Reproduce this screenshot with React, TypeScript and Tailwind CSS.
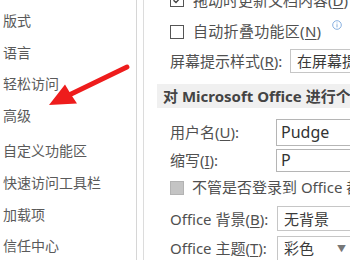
import React from "react";

const font = { fontFamily: "'Noto Sans', 'Noto Sans CJK SC', sans-serif" };

function U({ c }: { c: string }) {
  return <span className="underline underline-offset-2">{c}</span>;
}

function Info() {
  return (
    <svg width="10" height="10" viewBox="0 0 10 10" className="shrink-0">
      <circle cx="5" cy="5" r="4.3" fill="none" stroke="#7aa7dc" strokeWidth="0.9" />
      <rect x="4.55" y="4.2" width="0.9" height="3.2" fill="#7aa7dc" />
      <rect x="4.55" y="2.5" width="0.9" height="0.9" fill="#7aa7dc" />
    </svg>
  );
}

function Box({ checked, disabled }: { checked?: boolean; disabled?: boolean }) {
  return (
    <div
      className={
        "w-[14px] h-[14px] shrink-0 border flex items-center justify-center " +
        (disabled ? "bg-[#c4c4c4] border-[#b3b3b3]" : "bg-white border-[#555555]")
      }
    >
      {checked && (
        <svg width="10" height="10" viewBox="0 0 10 10">
          <path d="M1.5 5.2 L4 7.6 L8.6 2.4" fill="none" stroke="#444" strokeWidth="1.4" />
        </svg>
      )}
    </div>
  );
}

export default function App() {
  const side = ["版式", "语言", "轻松访问", "高级"];
  return (
    <div className="relative w-[350px] h-[260px] overflow-hidden bg-white flex" style={font}>
      {/* sidebar */}
      <div className="w-[137px] shrink-0 border-r border-[#d6d6d6] flex flex-col text-[14px] text-[#5a5a5a]">
        <div className="pt-[5px]">
          {side.map((s) => (
            <div key={s} className="h-[31.5px] flex items-center pl-[3px]">
              {s}
            </div>
          ))}
        </div>
        <div className="h-[2px] bg-[#e3e3e3] mr-[2px]" />
        <div className="mt-[4px]">
          {["自定义功能区", "快速访问工具栏"].map((s) => (
            <div key={s} className="h-[31.5px] flex items-center pl-[3px]">
              {s}
            </div>
          ))}
        </div>
        <div className="h-[2px] bg-[#e3e3e3] mr-[2px]" />
        <div className="mt-[1px]">
          {["加载项", "信任中心"].map((s) => (
            <div key={s} className="h-[31px] flex items-center pl-[3px]">
              {s}
            </div>
          ))}
        </div>
      </div>

      {/* main panel */}
      <div className="ml-[6px] flex-1 border-l border-[#dcdcdc] flex flex-col text-[15px] text-[#505050] whitespace-nowrap min-w-0">
        <div className="mt-[-15px] h-[30px] flex items-center pl-[26px] gap-[9px]">
          <Box checked />
          <span className="shrink-0">拖动时更新文档内容(<U c="D" />)</span>
          <span className="ml-[2px] -mt-[10px]"><Info /></span>
        </div>
        <div className="h-[34px] flex items-center pl-[26px] gap-[9px]">
          <Box />
          <span className="shrink-0 tracking-[0.3px]">自动折叠功能区(<U c="N" />)</span>
          <span className="ml-[2px] -mt-[14px]"><Info /></span>
        </div>
        <div className="h-[26px] flex items-center pl-[26px]">
          <span className="w-[120px] shrink-0">屏幕提示样式(<U c="R" />):</span>
          <div className="h-[24px] flex-1 min-w-0 overflow-hidden border border-r-0 border-[#c6c6c6] flex items-center pl-[6px] text-[#3a3a3a]">
            在屏幕提示中显示功能说明
          </div>
        </div>
        <div className="mt-[10px] ml-[13px] h-[24px] bg-[#f0f0f0] flex items-center pl-[6px] font-bold text-[#444] overflow-hidden">
          对 Microsoft Office 进行个性化设置
        </div>
        <div className="mt-[11px] h-[27px] flex items-center pl-[26px]">
          <span className="w-[106px] shrink-0">用户名(<U c="U" />):</span>
          <div className="h-full flex-1 min-w-0 border border-r-0 border-[#b5b5b5] flex items-center pl-[4px] text-[16px] text-[#333]">
            Pudge
          </div>
        </div>
        <div className="mt-[3px] h-[23px] flex items-center pl-[26px]">
          <span className="w-[106px] shrink-0">缩写(<U c="I" />):</span>
          <div className="h-full flex-1 min-w-0 border border-r-0 border-[#b5b5b5] flex items-center pl-[4px] text-[16px] text-[#333]">
            P
          </div>
        </div>
        <div className="mt-[4px] h-[24px] flex items-center pl-[26px] gap-[8px]">
          <Box disabled />
          <span className="shrink-0">不管是否登录到 Office 都始终使用这些值</span>
        </div>
        <div className="mt-[7px] h-[25px] flex items-center pl-[26px]">
          <span className="w-[107px] shrink-0">Office 背景(<U c="B" />):</span>
          <div className="h-full flex-1 min-w-0 border border-r-0 border-[#c6c6c6] flex items-center pl-[6px] text-[#3a3a3a]">
            无背景
          </div>
        </div>
        <div className="mt-[5px] h-[24px] flex items-center pl-[26px]">
          <span className="w-[107px] shrink-0">Office 主题(<U c="T" />):</span>
          <div className="h-full flex-1 min-w-0 border border-r-0 border-b-0 border-[#c6c6c6] flex items-center pl-[6px] text-[#3a3a3a]">
            <span className="w-[53px] shrink-0">彩色</span>
            <span className="text-[9px] text-[#777]">▼</span>
          </div>
        </div>
      </div>

      {/* red arrow overlay */}
      <svg className="absolute left-0 top-0 pointer-events-none" width="350" height="260">
        <line x1="127" y1="67" x2="66" y2="96.5" stroke="#ee1c1c" strokeWidth="4.8" strokeLinecap="round" />
        <polygon points="49,105 65,84.5 71,94.5 77,103.5" fill="#ee1c1c" />
      </svg>
    </div>
  );
}
